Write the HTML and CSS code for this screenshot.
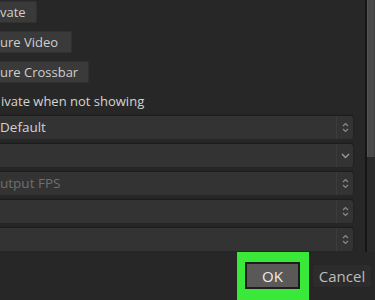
FILE: index.html
```html
<!DOCTYPE html>
<html lang="en">
<head>
    <meta charset="UTF-8">
    <meta name="viewport" content="width=device-width, initial-scale=1.0">
    <title>Settings</title>
    <link rel="stylesheet" href="styles.css">
</head>
<body>

<div class="window">
    <div class="top">
        <div class="panel">
            <button class="btn-top">vate</button>
            <button class="btn-top">ure Video</button>
            <button class="btn-top">ure Crossbar</button>
            <div class="label">ivate when not showing</div>

            <div class="field">
                <span class="field-text">Default</span>
                <span class="spin">
                    <svg width="7" height="11" viewBox="0 0 7 11"><path d="M1 4 L3.5 1.5 L6 4 M1 7 L3.5 9.5 L6 7" fill="none" stroke="#8a8a8a" stroke-width="1.2"/></svg>
                </span>
            </div>
            <div class="field combo">
                <span class="field-text"></span>
                <span class="spin">
                    <svg width="9" height="6" viewBox="0 0 9 6"><path d="M1 1 L4.5 4.5 L8 1" fill="none" stroke="#9a9a9a" stroke-width="1.4"/></svg>
                </span>
            </div>
            <div class="field">
                <span class="field-text dim">utput FPS</span>
                <span class="spin">
                    <svg width="7" height="11" viewBox="0 0 7 11"><path d="M1 4 L3.5 1.5 L6 4 M1 7 L3.5 9.5 L6 7" fill="none" stroke="#8a8a8a" stroke-width="1.2"/></svg>
                </span>
            </div>
            <div class="field">
                <span class="field-text"></span>
                <span class="spin">
                    <svg width="7" height="11" viewBox="0 0 7 11"><path d="M1 4 L3.5 1.5 L6 4 M1 7 L3.5 9.5 L6 7" fill="none" stroke="#8a8a8a" stroke-width="1.2"/></svg>
                </span>
            </div>
            <div class="field">
                <span class="field-text"></span>
                <span class="spin">
                    <svg width="7" height="11" viewBox="0 0 7 11"><path d="M1 4 L3.5 1.5 L6 4 M1 7 L3.5 9.5 L6 7" fill="none" stroke="#8a8a8a" stroke-width="1.2"/></svg>
                </span>
            </div>
        </div>
        <div class="scrollbar">
            <div class="thumb"></div>
        </div>
    </div>

    <div class="footer">
        <span class="highlight">
            <button class="btn ok">OK</button>
        </span>
        <button class="btn cancel">Cancel</button>
    </div>
</div>

</body>
</html>
```

FILE: styles.css
```css
    body {
        margin: 0;
        padding: 0;
        width: 375px;
        height: 300px;
        overflow: hidden;
        background-color: #272727;
        font-family: "Open Sans", "Noto Sans", sans-serif;
        font-size: 13px;
        color: #cfcfcf;
    }
    .window {
        display: flex;
        flex-direction: column;
        height: 300px;
    }
    .top {
        display: flex;
        height: 252px;
    }
    .panel {
        flex: 1;
        padding-top: 1px;
        padding-right: 12px;
    }
    .btn-top {
        display: block;
        height: 22px;
        margin: 0 0 8px 0;
        padding: 0 10px 0 0;
        background-color: #3a3a3a;
        border: 1px solid #313131;
        border-left: none;
        border-radius: 0 2px 2px 0;
        color: #cfcfcf;
        font-family: inherit;
        font-size: 13px;
        text-align: left;
        line-height: 20px;
    }
    .btn-top:nth-child(2) {
        padding-right: 13px;
    }
    .label {
        height: 18px;
        line-height: 18px;
        margin-top: 9px;
        margin-bottom: 6px;
        padding-left: 1px;
        color: #d4d4d4;
    }
    .field {
        display: flex;
        height: 23px;
        margin-top: 5px;
        background-color: #333333;
        border-radius: 0 3px 3px 0;
        box-shadow: 0 -1px 2px rgba(0, 0, 0, 0.35);
    }
    .field:first-of-type {
        margin-top: 0;
    }
    .field-text {
        flex: 1;
        line-height: 23px;
        font-size: 13.5px;
        color: #d2d2d2;
    }
    .field-text.dim {
        color: #6e6e6e;
    }
    .spin {
        width: 16px;
        display: flex;
        align-items: center;
        justify-content: center;
        border-left: 1px solid #3b3b3b;
    }
    .scrollbar {
        width: 8px;
        border-left: 2px solid #151515;
        background-color: #2a2a2a;
    }
    .thumb {
        height: 157px;
        background-color: #4a4a4a;
        border-left: 1px solid #555;
        border-right: 1px solid #3e3e3e;
    }
    .footer {
        display: flex;
        justify-content: flex-end;
        align-items: flex-start;
        gap: 3px;
        padding-right: 3px;
        height: 48px;
    }
    .highlight {
        display: block;
        padding: 10px 9px 12px 8px;
        background-color: #3ae83a;
    }
    .btn {
        font-family: inherit;
        font-size: 15px;
        cursor: pointer;
    }
    .ok {
        display: block;
        width: 55px;
        height: 27px;
        padding: 0;
        background-color: #5b5858;
        border: 2px solid #1d1d1d;
        color: #ececec;
    }
    .cancel {
        width: 60px;
        height: 24px;
        margin-top: 12px;
        padding: 0;
        background-color: #2c2c2c;
        border: 1px solid #262626;
        border-radius: 2px;
        color: #bdbdbd;
    }
```
